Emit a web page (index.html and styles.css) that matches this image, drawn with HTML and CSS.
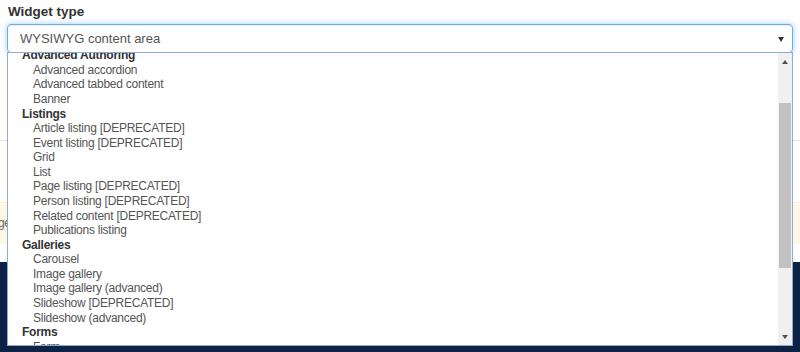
FILE: index.html
```html
<!DOCTYPE html>
<html>
<head>
<meta charset="utf-8">
<link rel="stylesheet" href="styles.css">
</head>
<body>
<div class="page">
  <div class="field">
    <div class="label">Widget type</div>
    <div class="select">
      <span class="select-value">WYSIWYG content area</span>
      <span class="caret"></span>
    </div>
  </div>
  <div class="rule"></div>
  <div class="alert">ge</div>
  <div class="footer"></div>

  <div class="dropdown">
    <div class="options">
      <div class="opt-list">
        <div class="group">Advanced Authoring</div>
        <div class="item">Advanced accordion</div>
        <div class="item">Advanced tabbed content</div>
        <div class="item">Banner</div>
        <div class="group">Listings</div>
        <div class="item">Article listing [DEPRECATED]</div>
        <div class="item">Event listing [DEPRECATED]</div>
        <div class="item">Grid</div>
        <div class="item">List</div>
        <div class="item">Page listing [DEPRECATED]</div>
        <div class="item">Person listing [DEPRECATED]</div>
        <div class="item">Related content [DEPRECATED]</div>
        <div class="item">Publications listing</div>
        <div class="group">Galleries</div>
        <div class="item">Carousel</div>
        <div class="item">Image gallery</div>
        <div class="item">Image gallery (advanced)</div>
        <div class="item">Slideshow [DEPRECATED]</div>
        <div class="item">Slideshow (advanced)</div>
        <div class="group">Forms</div>
        <div class="item">Form</div>
      </div>
    </div>
    <div class="scrollbar">
      <div class="sb-btn"><span class="tri-up"></span></div>
      <div class="sb-track"><div class="sb-thumb"></div></div>
      <div class="sb-btn"><span class="tri-down"></span></div>
    </div>
  </div>
</div>
</body>
</html>
```

FILE: styles.css
```css
html, body {
  margin: 0;
  padding: 0;
  background: #ffffff;
}
body {
  font-family: "Liberation Sans", Arial, sans-serif;
  color: #555555;
}
.page {
  position: relative;
  width: 800px;
  height: 352px;
  overflow: hidden;
}
.field {
  padding: 4px 8px 0 7px;
}
.label {
  font-size: 13.5px;
  font-weight: bold;
  color: #333333;
  line-height: 16px;
  margin-left: 1px;
  margin-bottom: 4px;
}
.select {
  box-sizing: border-box;
  height: 29px;
  width: 786px;
  border: 1px solid #66afe9;
  border-radius: 4px;
  box-shadow: inset 0 1px 1px rgba(0,0,0,0.075), 0 0 6px rgba(102,175,233,0.6);
  display: flex;
  align-items: center;
  padding: 0 8px 0 12px;
  background: #fff;
}
.select-value {
  flex: 1;
  font-size: 13px;
  color: #555555;
}
.caret {
  width: 0;
  height: 0;
  border-left: 3.5px solid transparent;
  border-right: 3.5px solid transparent;
  border-top: 5px solid #333;
  margin-top: 1px;
}
.rule {
  margin-top: 87px;
  height: 1px;
  background: #e5e5e5;
}
.alert {
  margin-top: 61px;
  height: 42px;
  background: #fcf8e3;
  border-top: 1px solid #faf2cc;
  box-sizing: border-box;
  line-height: 40px;
  font-size: 12px;
  letter-spacing: -0.3px;
  color: #666;
  text-indent: -2px;
  overflow: hidden;
}
.footer {
  margin-top: 18px;
  height: 90px;
  background: #0c2345;
}
.dropdown {
  position: absolute;
  top: 52px;
  left: 7px;
  width: 786px;
  height: 294px;
  box-sizing: border-box;
  border: 1px solid #8eaadb;
  background: #fff;
  display: flex;
}
.options {
  flex: 1;
  overflow: hidden;
}
.opt-list {
  margin-top: -4.8px;
  font-size: 12px;
  letter-spacing: -0.25px;
  line-height: 14.58px;
}
.group {
  font-weight: bold;
  color: #333333;
  padding-left: 14px;
}
.item {
  color: #555555;
  padding-left: 25px;
}
.scrollbar {
  width: 14px;
  background: #f0f0f0;
  display: flex;
  flex-direction: column;
}
.sb-btn {
  height: 17px;
  display: flex;
  align-items: center;
  justify-content: center;
}
.sb-track {
  flex: 1;
  padding-top: 33px;
}
.sb-thumb {
  margin: 0 1px 0 1px;
  height: 165px;
  background: #c1c1c1;
}
.tri-up {
  width: 0;
  height: 0;
  border-left: 3.5px solid transparent;
  border-right: 3.5px solid transparent;
  border-bottom: 4px solid #505050;
}
.tri-down {
  width: 0;
  height: 0;
  border-left: 3.5px solid transparent;
  border-right: 3.5px solid transparent;
  border-top: 4px solid #505050;
}
```
